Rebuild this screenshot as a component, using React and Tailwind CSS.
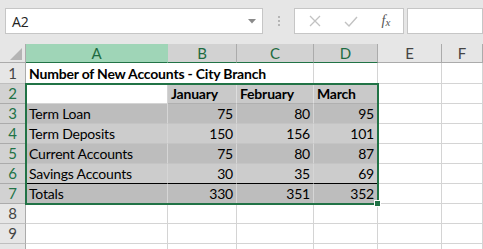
import React from "react";

const COLS = ["A", "B", "C", "D", "E", "F"];

const rows = [
  { n: 1, cells: [{ t: "Number of New Accounts - City Branch", bold: true, overflow: true }] },
  { n: 2, header: true, cells: [{ t: "" }, { t: "January" }, { t: "February" }, { t: "March" }] },
  { n: 3, band: "dark", cells: [{ t: "Term Loan" }, { t: "75" }, { t: "80" }, { t: "95" }] },
  { n: 4, band: "light", cells: [{ t: "Term Deposits" }, { t: "150" }, { t: "156" }, { t: "101" }] },
  { n: 5, band: "dark", cells: [{ t: "Current Accounts" }, { t: "75" }, { t: "80" }, { t: "87" }] },
  { n: 6, band: "light", totalAbove: true, cells: [{ t: "Savings Accounts" }, { t: "30" }, { t: "35" }, { t: "69" }] },
  { n: 7, band: "dark", cells: [{ t: "Totals" }, { t: "330" }, { t: "351" }, { t: "352" }] },
  { n: 8, cells: [] },
  { n: 9, cells: [] },
  { n: 10, cells: [], noLabel: true },
];

function RowHeader({ n, h, noLabel }) {
  const sel = n >= 2 && n <= 7;
  return (
    <div
      className={
        "flex items-center justify-center border-b border-r text-[15px] " +
        h +
        " " +
        (sel
          ? "bg-[#d2d2d2] text-[#217346] border-b-[#ababab] border-r-[#217346]"
          : "bg-[#e6e6e6] text-[#444444] border-b-[#bfbfbf] border-r-[#ababab]")
      }
    >
      {noLabel ? "" : n}
    </div>
  );
}

function BodyRow({ row }) {
  const h = row.n === 1 ? "h-[21px]" : "h-[20px]";
  const out = [<RowHeader key="rh" n={row.n} h={h} noLabel={row.noLabel} />];
  for (let c = 0; c < 6; c++) {
    const cell = row.cells[c];
    let cls =
      "flex items-center border-b border-r px-[3px] whitespace-nowrap text-[14px] tracking-[-0.2px] text-black " +
      h +
      " ";
    if (row.n === 1) {
      cls += "bg-white border-b-[#d4d4d4] ";
      cls += c === 0 || c === 1 ? "border-r-white " : "border-r-[#d4d4d4] ";
      if (c === 0) cls += "overflow-visible relative z-10 ";
    } else if (row.header && c < 4) {
      if (c === 0) cls += "bg-white border-r-[#d4d4d4] border-b-[#d4d4d4] ";
      else cls += "bg-[#c9c9c9] border-r-[#dedede] border-b-[#b0b0b0] font-bold ";
    } else if (row.band && c < 4) {
      cls += (row.band === "dark" ? "bg-[#bdbdbd] " : "bg-[#cccccc] ") + "border-r-[#d6d6d6] ";
      cls += row.totalAbove ? "border-b-black " : "border-b-[#c4c4c4] ";
      if (c > 0) cls += "justify-end ";
    } else {
      cls += "bg-white border-[#d4d4d4] ";
    }
    out.push(
      <div key={c} className={cls}>
        {cell ? <span className={cell.bold ? "font-bold" : ""}>{cell.t}</span> : null}
      </div>
    );
  }
  return out;
}

export default function App() {
  return (
    <div className="w-[483px] h-[249px] overflow-hidden bg-white font-['Lato','Noto_Sans',sans-serif]">
      {/* formula bar */}
      <div className="h-[44px] bg-[#e6e6e6] flex items-start pt-[8px] pl-[5px]">
        <div className="w-[258px] h-[26px] bg-white border border-[#c6c6c6] flex items-center justify-between pl-[6px] pr-[6px] font-['Open_Sans',sans-serif] text-[14px] text-[#222]">
          <span>A2</span>
          <svg width="8" height="5" viewBox="0 0 8 5">
            <path d="M0 0 L8 0 L4 4.5 Z" fill="#8a8a8a" />
          </svg>
        </div>
        <div className="w-[31px] h-[26px] flex flex-col items-center justify-center gap-[2px]">
          <span className="w-[2px] h-[2px] bg-[#b5b5b5]" />
          <span className="w-[2px] h-[2px] bg-[#b5b5b5]" />
          <span className="w-[2px] h-[2px] bg-[#b5b5b5]" />
        </div>
        <div className="w-[110px] h-[26px] bg-white border border-[#c6c6c6] flex items-center">
          <div className="w-[37px] flex justify-center pl-[2px]">
            <svg width="12" height="12" viewBox="0 0 12 12">
              <path d="M1 1 L11 11 M11 1 L1 11" stroke="#c2c2c2" strokeWidth="1.3" />
            </svg>
          </div>
          <div className="w-[37px] flex justify-center">
            <svg width="14" height="11" viewBox="0 0 14 11">
              <path d="M1 6 L5 10 L13 1" stroke="#c2c2c2" strokeWidth="1.4" fill="none" />
            </svg>
          </div>
          <div className="w-[34px] flex justify-center font-['Liberation_Serif',serif] italic text-[14px] text-[#555] leading-none">
            <span>f</span>
            <span className="text-[11px] mt-[3px]">x</span>
          </div>
        </div>
        <div className="ml-[3px] flex-1 h-[26px] bg-white border border-[#c6c6c6]" />
      </div>

      {/* sheet */}
      <div className="relative">
        <div className="grid grid-cols-[26px_142px_69px_77px_64px_64px_1fr]">
          {/* header row */}
          <div className="h-[19px] bg-[#e6e6e6] border-r border-b border-[#ababab] relative">
            <svg className="absolute right-[3px] bottom-[2px]" width="12" height="12" viewBox="0 0 12 12">
              <path d="M12 0 L12 12 L0 12 Z" fill="#b4b4b4" />
            </svg>
          </div>
          {COLS.map((c, i) => {
            const selA = i === 0;
            const sel = i < 4;
            return (
              <div
                key={c}
                className={
                  "h-[19px] flex items-center justify-center border-r border-b text-[15px] " +
                  (selA
                    ? "bg-[#9fd5b7] text-[#1e6b41] border-r-[#9fd5b7] border-b-[#217346]"
                    : sel
                    ? "bg-[#d2d2d2] text-[#1e6b41] border-r-[#ababab] border-b-[#217346]"
                    : "bg-[#e6e6e6] text-[#444444] border-r-[#ababab] border-b-[#ababab]")
                }
              >
                {c}
              </div>
            );
          })}
          {rows.map((r) => (
            <BodyRow key={r.n} row={r} />
          ))}
        </div>
        {/* selection */}
        <div className="absolute left-[25px] top-[39px] w-[354px] h-[122px] border-2 border-[#217346] pointer-events-none z-20" />
        <div className="absolute left-[374px] top-[156px] w-[7px] h-[7px] bg-[#217346] border border-white z-30" />
      </div>
    </div>
  );
}
